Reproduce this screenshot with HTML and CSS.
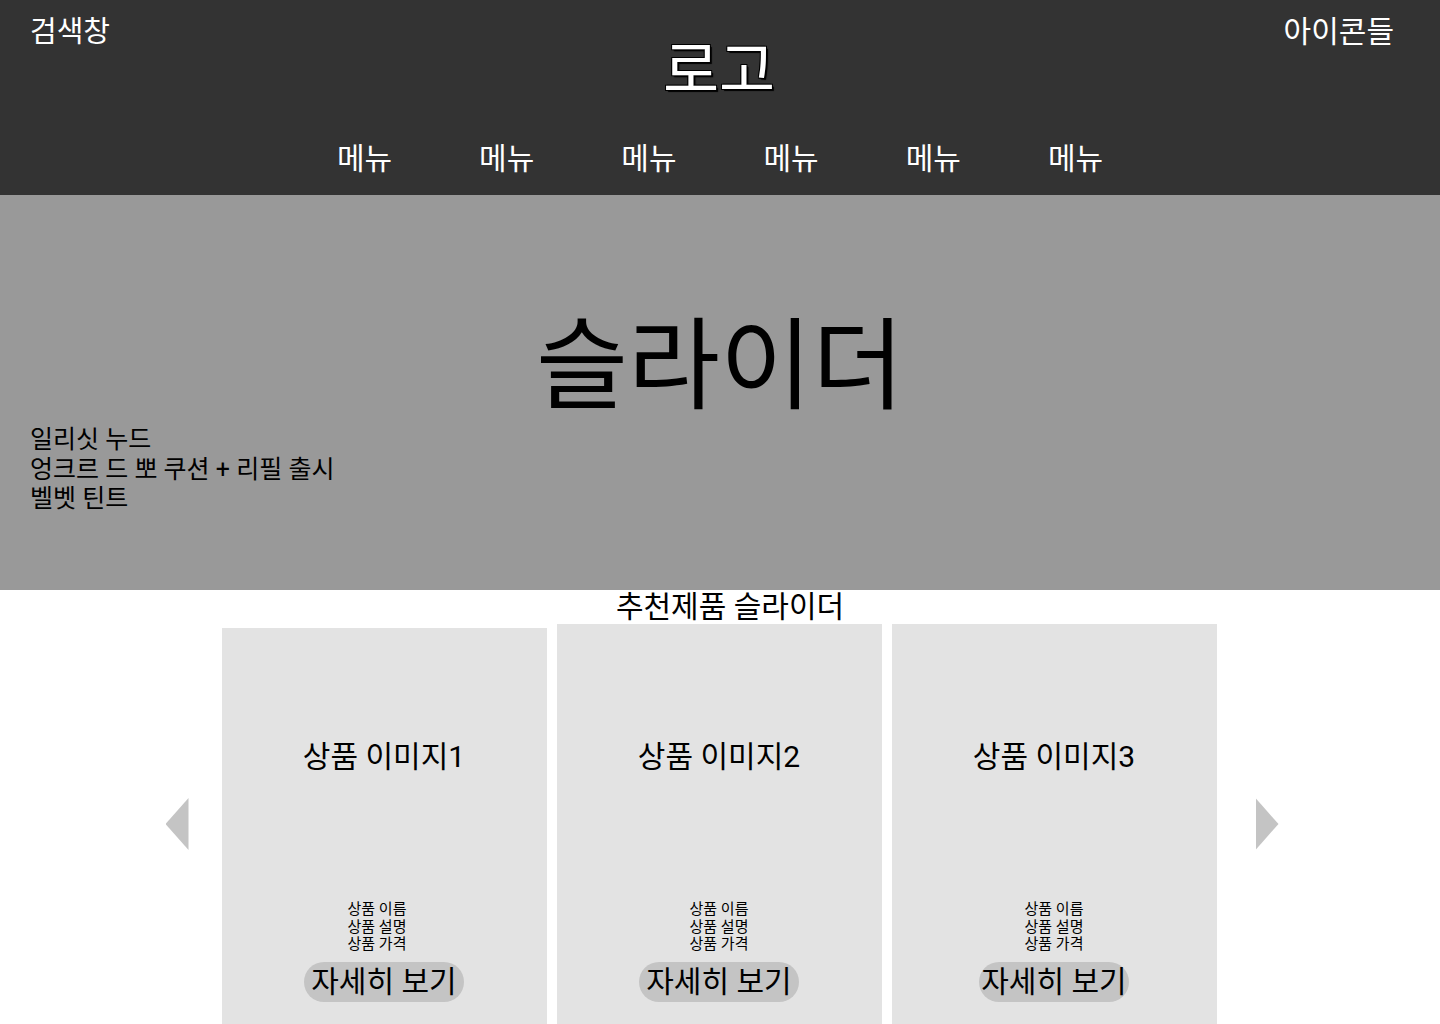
FILE: index.html
```html
<!DOCTYPE html>
<html lang="ko">
<head>
<meta charset="utf-8">
<title>메인</title>
<link rel="stylesheet" href="styles.css">
</head>
<body>
<header class="header">
  <div class="header-top">
    <div class="search">검색창</div>
    <div class="logo">로고</div>
    <div class="icons">아이콘들</div>
  </div>
  <nav class="nav">
    <a class="nav-item">메뉴</a>
    <a class="nav-item">메뉴</a>
    <a class="nav-item">메뉴</a>
    <a class="nav-item">메뉴</a>
    <a class="nav-item">메뉴</a>
    <a class="nav-item">메뉴</a>
  </nav>
</header>
<section class="hero">
  <div class="hero-title">슬라이더</div>
  <div class="hero-text">
    <p>일리싯 누드</p>
    <p>엉크르 드 뽀 쿠션 + 리필 출시</p>
    <p>벨벳 틴트</p>
  </div>
</section>
<section class="products">
  <h2 class="products-title">추천제품 슬라이더</h2>
  <div class="products-row">
    <div class="arrow arrow-left"></div>
    <div class="cards">
      <div class="card card-first">
        <div class="card-image">상품 이미지1</div>
        <div class="card-info card-info-shift">
          <p>상품 이름</p>
          <p>상품 설명</p>
          <p>상품 가격</p>
        </div>
        <button class="card-btn">자세히 보기</button>
      </div>
      <div class="card">
        <div class="card-image">상품 이미지2</div>
        <div class="card-info">
          <p>상품 이름</p>
          <p>상품 설명</p>
          <p>상품 가격</p>
        </div>
        <button class="card-btn">자세히 보기</button>
      </div>
      <div class="card">
        <div class="card-image">상품 이미지3</div>
        <div class="card-info">
          <p>상품 이름</p>
          <p>상품 설명</p>
          <p>상품 가격</p>
        </div>
        <button class="card-btn card-btn-tight">자세히 보기</button>
      </div>
    </div>
    <div class="arrow arrow-right"></div>
  </div>
</section>
</body>
</html>
```
FILE: styles.css
```css
* { box-sizing: border-box; }
html, body { margin: 0; padding: 0; }
body {
  font-family: Roboto, "Noto Sans CJK KR", sans-serif;
  color: #000;
  background: #fff;
  overflow: hidden;
  height: 1024px;
}
p { margin: 0; }

.header {
  background: #333333;
  height: 195px;
  color: #fff;
}
.header-top {
  display: grid;
  grid-template-columns: 1fr auto 1fr;
  align-items: start;
  padding: 12px 46px 0 30px;
}
.search {
  font-size: 29px;
  line-height: 40px;
}
.icons {
  font-size: 30px;
  line-height: 40px;
  justify-self: end;
}
.logo {
  font-size: 61px;
  line-height: 70px;
  margin-top: 24px;
  margin-left: 14px;
  text-shadow: 1px 1px 0 #000, -1px -1px 0 #000, 1px -1px 0 #000, -1px 1px 0 #000, 2px 2px 1px #000;
}
.nav {
  display: flex;
  justify-content: center;
  gap: 87px;
  margin-top: 33px;
}
.nav-item {
  font-size: 30px;
  line-height: 40px;
  color: #fff;
}

.hero {
  background: #999999;
  height: 395px;
  padding-top: 107px;
}
.hero-title {
  text-align: center;
  font-size: 100px;
  line-height: 130px;
}
.hero-text {
  padding-left: 30px;
  font-size: 25px;
  line-height: 29.5px;
  margin-top: -7px;
}

.products {
  text-align: center;
}
.products-title {
  margin: 0;
  font-weight: normal;
  font-size: 30px;
  line-height: 34px;
  padding-left: 20px;
}
.products-row {
  display: flex;
  justify-content: center;
  align-items: flex-start;
  padding-left: 4px;
}
.arrow {
  width: 23px;
  height: 52px;
  margin-top: 174px;
  background: #c4c4c4;
}
.arrow-left {
  clip-path: polygon(100% 0, 0 50%, 100% 100%);
  margin-right: 33px;
}
.arrow-right {
  clip-path: polygon(0 0, 100% 50%, 0 100%);
  margin-left: 39px;
}
.cards {
  display: flex;
  gap: 10px;
  align-items: flex-start;
}
.card {
  width: 325px;
  height: 420px;
  background: #e3e3e3;
  display: flex;
  flex-direction: column;
  align-items: center;
  padding-top: 113px;
}
.card-first {
  margin-top: 4px;
  padding-top: 109px;
}
.card-image {
  font-size: 30px;
  line-height: 40px;
  height: 164px;
}
.card-info {
  font-size: 15px;
  line-height: 17.5px;
}
.card-info-shift {
  margin-right: 14px;
}
.card-btn {
  margin-top: 8px;
  font-family: inherit;
  font-size: 30px;
  line-height: 40px;
  height: 40px;
  padding: 0 7px;
  border: none;
  border-radius: 20px;
  background: #c4c4c4;
  color: #000;
}
.card-btn-tight {
  padding: 0 2px;
}
```
